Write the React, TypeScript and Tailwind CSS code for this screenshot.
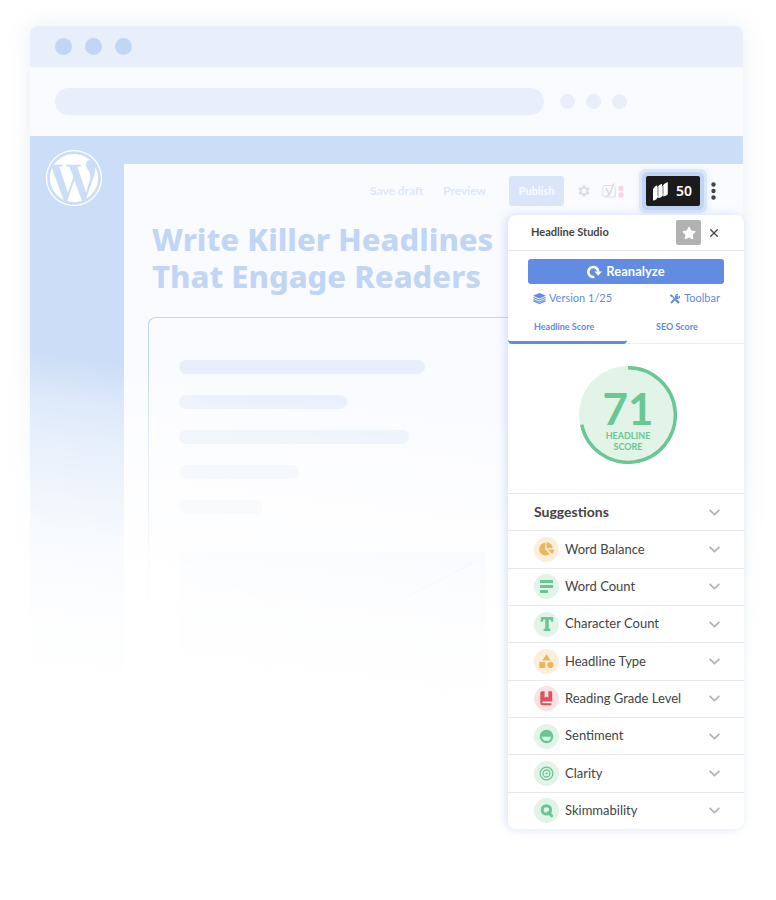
import React from "react";
import { FaStar, FaWordpress } from "react-icons/fa";
import { BsFonts } from "react-icons/bs";

type Tone = "amber" | "green" | "red";

const tones: Record<Tone, string> = {
  amber: "bg-[#fbeedb] text-[#e9b75d]",
  green: "bg-[#e2f3e8] text-[#69c793]",
  red: "bg-[#f9e2e4] text-[#e1525f]",
};

function Chevron() {
  return (
    <svg width="11" height="7" viewBox="0 0 11 7" fill="none" stroke="#b3b3b3" strokeWidth="1.7" aria-hidden="true">
      <path d="M0.6 0.8 5.5 5.6 10.4 0.8" />
    </svg>
  );
}

function Glyph({ children }: { children: React.ReactNode }) {
  return (
    <svg width="15" height="15" viewBox="0 0 15 15" fill="currentColor" aria-hidden="true">
      {children}
    </svg>
  );
}

const suggestions: { label: string; tone: Tone; icon: React.ReactNode }[] = [
  {
    label: "Word Balance",
    tone: "amber",
    icon: (
      <Glyph>
        <path d="M6.3 0.8A6.3 6.3 0 0 0 6.6 13.4 6.3 6.3 0 0 0 10.6 12L6.3 7.5Z" />
        <path d="M7.5 0.2A6.3 6.3 0 0 1 13.7 6.3H7.5Z" />
        <path d="M8.6 7.6H15A6.4 6.4 0 0 1 13.1 12Z" />
      </Glyph>
    ),
  },
  {
    label: "Word Count",
    tone: "green",
    icon: (
      <Glyph>
        <path d="M1 1h13v3H1zM1 6h13v3H1zM1 11h8v3H1z" />
      </Glyph>
    ),
  },
  {
    label: "Character Count",
    tone: "green",
    icon: <BsFonts size={20} stroke="currentColor" strokeWidth={1.3} aria-hidden="true" />,
  },
  {
    label: "Headline Type",
    tone: "amber",
    icon: (
      <Glyph>
        <path d="M7.5 0.2 11.7 6.6H3.3ZM0.3 8h6v6h-6z" />
        <circle cx="11.4" cy="11" r="3.1" />
      </Glyph>
    ),
  },
  {
    label: "Reading Grade Level",
    tone: "red",
    icon: (
      <Glyph>
        <path d="M2.8 0.3H5.6V6.8L7.5 5.4 9.4 6.8V0.3H12.2Q13.2 0.3 13.2 1.3V10.4H3.9Q3.2 10.4 3.2 11.3T3.9 12.2H12.4V14.2H3.5Q1.3 14.2 1.3 12V1.8Q1.3 0.3 2.8 0.3Z" />
      </Glyph>
    ),
  },
  {
    label: "Sentiment",
    tone: "green",
    icon: (
      <Glyph>
        <path
          fillRule="evenodd"
          d="M7.5 0.7a6.8 6.8 0 1 0 0 13.6a6.8 6.8 0 0 0 0-13.6ZM2.9 7.8H12.1A4.6 4 0 0 1 2.9 7.8Z"
        />
      </Glyph>
    ),
  },
  {
    label: "Clarity",
    tone: "green",
    icon: (
      <Glyph>
        <g fill="none" stroke="currentColor" strokeWidth="1.3">
          <circle cx="7.5" cy="7.5" r="6.3" />
          <circle cx="7.5" cy="7.5" r="3.5" />
        </g>
        <circle cx="7.5" cy="7.5" r="1.1" />
      </Glyph>
    ),
  },
  {
    label: "Skimmability",
    tone: "green",
    icon: (
      <Glyph>
        <circle cx="7.4" cy="6.9" r="4.2" fill="none" stroke="currentColor" strokeWidth="3" />
        <path d="M9.4 9.6 12.6 12.8" stroke="currentColor" strokeWidth="3" strokeLinecap="round" />
      </Glyph>
    ),
  },
];

function ScoreDial() {
  return (
    <div className="relative size-[98px]">
      <svg width="98" height="98" viewBox="0 0 98 98" aria-hidden="true">
        <circle cx="49" cy="49" r="49" fill="#e2f3e8" />
        <path d="M49 1.7A47.3 47.3 0 1 1 2.7 58.6" fill="none" stroke="#69c793" strokeWidth="3.4" />
      </svg>
      <div className="absolute inset-0 flex flex-col items-center pt-[22px] text-[#69c793]">
        <span className="text-[44px] leading-10 font-bold">71</span>
        <span className="mt-0.5 text-center text-[9px] leading-[11px] font-bold">
          HEADLINE
          <br />
          SCORE
        </span>
      </div>
    </div>
  );
}

function StudioPanel() {
  return (
    <aside className="absolute top-[189px] -right-px w-[236px] overflow-hidden rounded-lg bg-white text-[#444] font-['Lato',sans-serif] shadow-[-2px_0_10px_rgba(98,142,226,0.26)]">
      <header className="flex h-9 items-center border-b border-[#e8e8e8] pr-[26px] pl-[23px]">
        <h2 className="flex-1 text-[11px] font-bold">Headline Studio</h2>
        <button aria-label="Favorite" className="flex size-[25px] items-center justify-center rounded-xs bg-[#b2b2b2] text-white">
          <FaStar size={14} />
        </button>
        <button aria-label="Close" className="ml-[9px]">
          <svg width="8" height="8" viewBox="0 0 8 8" stroke="#444" strokeWidth="1.3">
            <path d="M0.3 0.3 7.7 7.7M7.7 0.3 0.3 7.7" />
          </svg>
        </button>
      </header>

      <div className="px-5 pt-2">
        <button className="flex h-[25px] w-full items-center justify-center gap-1 rounded-[3px] bg-[#628ce2] text-[13px] font-bold text-white">
          <svg width="15" height="14" viewBox="0 0 15 14" aria-hidden="true">
            <path d="M7.4 11.9A5 5 0 1 1 11.3 6.6" fill="none" stroke="white" strokeWidth="2.6" />
            <path d="M7.4 6.4H15L11.2 10.8Z" fill="white" />
          </svg>
          Reanalyze
        </button>
      </div>

      <div className="flex h-[29px] items-center justify-between pr-6 pl-[25px] text-[11px] text-[#628ce2]">
        <button className="flex items-center gap-[3px]">
          <svg width="13" height="11" viewBox="0 0 13 11" aria-hidden="true">
            <path d="M6.5 0 13 2.7 6.5 5.4 0 2.7Z" fill="currentColor" />
            <path d="M0.4 4.4 6.5 6.9 12.6 4.4M0.4 6.4 6.5 8.9 12.6 6.4M0.4 8.1 6.5 10.5 12.6 8.1" fill="none" stroke="currentColor" strokeWidth="1.1" />
          </svg>
          Version 1/25
        </button>
        <button className="flex items-center gap-1">
          <svg width="10" height="10" viewBox="0 0 10 10" fill="none" stroke="currentColor" aria-hidden="true">
            <path d="M1 9 8 2" strokeWidth="1.8" />
            <path d="M9.6 1.8A2 2 0 1 1 8 0.4" strokeWidth="1.3" />
            <path d="M0.8 0.8 5 5" strokeWidth="1.3" />
            <path d="M5.8 5.8 9 9" strokeWidth="2.4" />
            <path d="M0.3 1.2 2.4 2.6" strokeWidth="1.6" />
          </svg>
          Toolbar
        </button>
      </div>

      <div role="tablist" className="flex border-b border-[#eee] text-[9px] font-bold text-[#628ce2]">
        <button role="tab" aria-selected="true" className="-mb-px h-[31px] w-[119px] rounded-b-sm border-b-3 border-[#628ce2] pl-[26px] text-left">
          Headline Score
        </button>
        <button role="tab" aria-selected="false" className="h-[30px] flex-1 pb-0.5 pl-[29px] text-left">
          SEO Score
        </button>
      </div>

      <div className="flex justify-center pt-[22px] pb-[29px] pl-1">
        <ScoreDial />
      </div>

      <ul className="grid h-[336px] auto-rows-fr">
        <li className="border-t border-[#e4e4e4]">
          <button className="flex h-full w-full items-center justify-between pr-6 pl-[26px] text-sm font-bold">
            Suggestions
            <Chevron />
          </button>
        </li>
        {suggestions.map((s) => (
          <li key={s.label} className="border-t border-[#e8e8e8]">
            <button className="flex h-full w-full items-center pr-6 pl-[26px] text-[13px]">
              <span className={`mr-1.5 flex size-[25px] items-center justify-center rounded-full ${tones[s.tone]}`}>
                {s.icon}
              </span>
              <span className="flex-1 text-left">{s.label}</span>
              <Chevron />
            </button>
          </li>
        ))}
      </ul>
    </aside>
  );
}

function EditorToolbar() {
  return (
    <div className="flex h-[30px] items-center justify-end pr-[27px] text-xs font-semibold text-[#d9e5f9]">
      <button>Save draft</button>
      <button className="ml-5">Preview</button>
      <button className="ml-[23px] h-full w-[55px] rounded-[3px] bg-[#dae5f9] text-[11px] font-bold text-[#fafbff]">Publish</button>
      <button aria-label="Settings" className="ml-3.5">
        <svg width="12" height="12" viewBox="0 0 12 12" aria-hidden="true">
          <circle cx="6" cy="6" r="3.4" fill="none" stroke="#dcdde1" strokeWidth="2" />
          <path d="M6 0.2V2.2M6 9.8V11.8M1 3.1 2.7 4.1M9.3 7.9 11 8.9M1 8.9 2.7 7.9M9.3 4.1 11 3.1" stroke="#dcdde1" strokeWidth="2.6" />
        </svg>
      </button>
      <button aria-label="SEO" className="ml-3">
        <svg width="22" height="16" viewBox="0 0 22 16" fill="none" aria-hidden="true">
          <path d="M9.5 2.5H3Q0.8 2.5 0.8 4.5V12Q0.8 14 3 14H13.2V4.6Q13.2 3.4 12.4 3" stroke="#dddee2" />
          <path d="M4 5.2 7 11M11.8 0.5 8 10.4Q6.8 13 4.2 12.8" stroke="#dcdde1" strokeWidth="1.7" />
          <circle cx="19" cy="5.3" r="2.6" fill="#fad4dc" />
          <circle cx="19" cy="11.9" r="2.6" fill="#fad4dc" />
        </svg>
      </button>
      <button className="ml-[22px] flex h-full w-[54px] items-center justify-between rounded-[2px] bg-[#1b1b1b] pr-2 pl-[7px] font-['Noto_Sans',sans-serif] text-sm font-semibold text-white shadow-[0_0_0_4px_#c0d5f5,0_0_0_7px_#dae6f9,0_0_6px_7px_#e6eefb]">
        <svg width="15" height="19" viewBox="0 0 15 19" fill="white" aria-hidden="true">
          <path d="M0 7Q1.8 4 4.2 3.2V5.3Q6.2 2.4 9 1.7V4.5Q11 1.2 14.8 0V12.3Q13.4 14.2 10.3 14.5V12.4Q9 15.8 5.2 16V14Q4 18.3 0 18.6Z" />
          <path d="M5 4.5V14M10 3.8V12.5" stroke="#1b1b1b" strokeWidth="0.6" />
        </svg>
        50
      </button>
      <button aria-label="More options" className="ml-[11px]">
        <svg width="5" height="18" viewBox="0 0 5 18" fill="#444" aria-hidden="true">
          <circle cx="2.5" cy="2.5" r="2.2" />
          <circle cx="2.5" cy="9" r="2.2" />
          <circle cx="2.5" cy="15.5" r="2.2" />
        </svg>
      </button>
    </div>
  );
}

export default function App() {
  return (
    <main className="min-h-screen overflow-hidden bg-white pt-[26px] pr-[33px] pb-12 pl-[30px] font-['Lato',sans-serif]">
      <div className="relative">
        <div className="overflow-hidden rounded-t-lg bg-[#fafbff] shadow-[0_0_24px_rgba(98,120,170,0.13)]">
          <div className="flex h-[41px] items-center gap-[13px] bg-[#e8effb] pl-[25px]">
            <span className="size-[17px] rounded-full bg-[#c1d6f5]" />
            <span className="size-[17px] rounded-full bg-[#c1d6f5]" />
            <span className="size-[17px] rounded-full bg-[#c1d6f5]" />
          </div>
          <div className="flex h-[69px] items-center gap-[11px] pr-[116px] pb-px pl-[25px]">
            <span className="mr-[5px] h-[27px] flex-1 rounded-full bg-[#e8effb]" />
            <span className="size-[15px] rounded-full bg-[#e8effb]" />
            <span className="size-[15px] rounded-full bg-[#e8effb]" />
            <span className="size-[15px] rounded-full bg-[#e8effb]" />
          </div>
          <div className="flex min-h-[700px] bg-[#cbddf7]">
            <nav className="w-[94px] shrink-0 pt-[13px] pl-[15px]">
              <FaWordpress size={58} color="white" aria-label="WordPress" />
            </nav>
            <section className="mt-7 flex-1 bg-[#fafbff] pt-3">
              <EditorToolbar />
              <h1 className="mt-[15px] pl-7 font-['Noto_Sans',sans-serif] text-[31px] leading-[37px] font-extrabold text-[#c1d6f5]">
                Write Killer Headlines
                <br />
                That Engage Readers
              </h1>
              <div className="mt-[22px] ml-6 min-h-[460px] rounded-tl-lg border-t border-l border-[#c1d6f5] pt-[42px] pl-[30px]">
                <div className="flex flex-col gap-[21px]">
                  <span className="h-3.5 w-[246px] rounded-full bg-[#e8effb]" />
                  <span className="h-3.5 w-[168px] rounded-full bg-[#e8effb]" />
                  <span className="h-3.5 w-[230px] rounded-full bg-[#e8effb]" />
                  <span className="h-3.5 w-[120px] rounded-full bg-[#e8effb]" />
                  <span className="h-3.5 w-[84px] rounded-full bg-[#e8effb]" />
                </div>
                <svg width="307" height="167" viewBox="0 0 307 167" className="mt-[38px]" aria-hidden="true">
                  <path fill="#e8effb" d="M0 0h307v167H0z" />
                  <path d="M6 7 301 159M301 7 6 159" stroke="#c1d6f5" />
                </svg>
              </div>
            </section>
          </div>
        </div>
        <div className="pointer-events-none absolute -inset-x-10 top-[300px] -bottom-12 bg-[linear-gradient(187.5deg,transparent_122px,rgba(255,255,255,0.35)_165px,rgba(255,255,255,0.57)_215px,rgba(255,255,255,0.74)_264px,rgba(255,255,255,0.88)_314px,rgba(255,255,255,0.95)_363px,white_452px)]" />
        <StudioPanel />
      </div>
    </main>
  );
}
